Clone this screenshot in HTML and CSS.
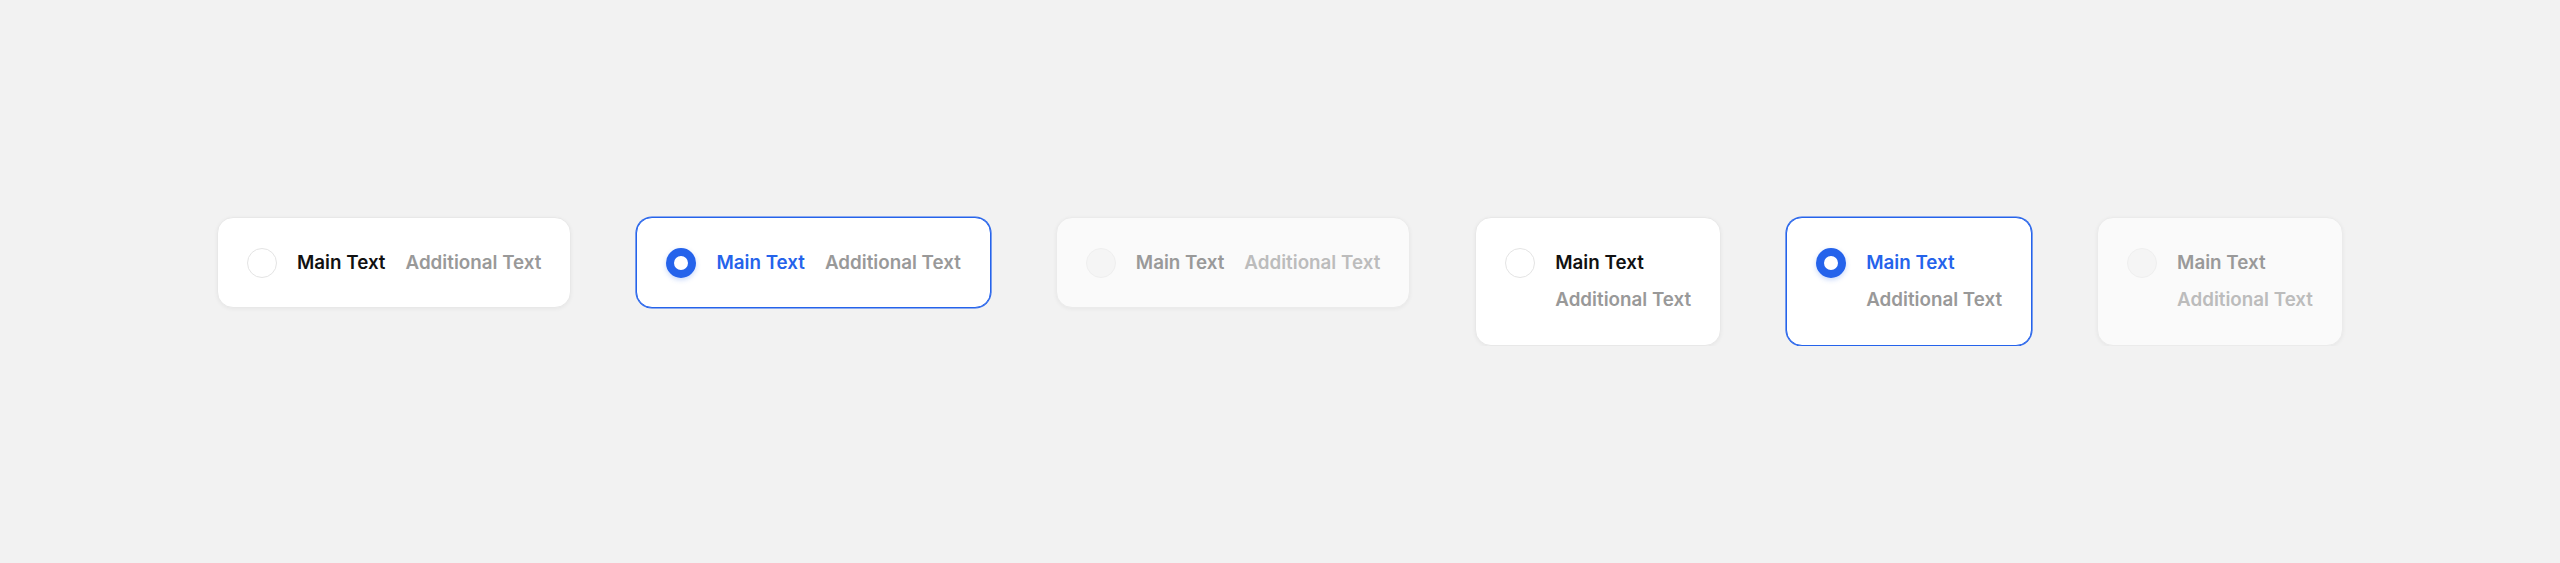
FILE: index.html
```html
<!DOCTYPE html>
<html>
<head>
  <title>Radio cards</title>
  <meta charset="UTF-8"/>
  <link rel="stylesheet" href="styles.css">
</head>

<body>
<main class="board">
  <!-- 横向 -->
  <label class="card">
    <span class="radio"></span>
    <span class="texts">
      <span class="main-text">Main Text</span>
      <span class="extra-text">Additional Text</span>
    </span>
  </label>

  <label class="card selected">
    <span class="radio"></span>
    <span class="texts">
      <span class="main-text">Main Text</span>
      <span class="extra-text">Additional Text</span>
    </span>
  </label>

  <label class="card disabled">
    <span class="radio"></span>
    <span class="texts">
      <span class="main-text">Main Text</span>
      <span class="extra-text">Additional Text</span>
    </span>
  </label>

  <!-- 纵向 -->
  <label class="card stacked">
    <span class="radio"></span>
    <span class="texts">
      <span class="main-text">Main Text</span>
      <span class="extra-text">Additional Text</span>
    </span>
  </label>

  <label class="card stacked selected">
    <span class="radio"></span>
    <span class="texts">
      <span class="main-text">Main Text</span>
      <span class="extra-text">Additional Text</span>
    </span>
  </label>

  <label class="card stacked disabled">
    <span class="radio"></span>
    <span class="texts">
      <span class="main-text">Main Text</span>
      <span class="extra-text">Additional Text</span>
    </span>
  </label>
</main>
</body>
</html>
```

FILE: styles.css
```css
* {
  box-sizing: border-box;
}

body {
  background-color: #f2f2f2;
  font-family: Inter, "Noto Sans", sans-serif;
  font-size: 18.8px;
  margin: 0;
  padding: 0;
}

.board {
  display: flex;
  align-items: flex-start;
  justify-content: center;
  gap: 65px;
  padding-top: 217px;
}

/* 卡片 */
.card {
  display: flex;
  align-items: flex-start;
  gap: 20px;
  padding: 29.5px 29px;
  background-color: #fff;
  border: 1px solid #e8e8e8;
  border-radius: 16px;
  box-shadow: 0 1px 4px rgba(0, 0, 0, 0.05);
  cursor: pointer;
}

.texts {
  display: flex;
  align-items: center;
  gap: 20px;
}

.card.stacked .texts {
  flex-direction: column;
  align-items: flex-start;
  gap: 7.5px;
}

.main-text,
.extra-text {
  font-weight: 600;
  line-height: 30px;
  white-space: nowrap;
}

.main-text {
  color: #111;
}

.extra-text {
  color: #999;
}

/* 单选圆 */
.radio {
  width: 30px;
  height: 30px;
  flex-shrink: 0;
  border-radius: 50%;
  background-color: #fff;
  border: 1.5px solid #e4e4e4;
}

/* 选中 */
.card.selected {
  border-color: #2563eb;
  box-shadow: 0 0 0 0.6px #2563eb;
}

.card.selected .main-text {
  color: #2563eb;
}

.card.selected .radio {
  border: 8px solid #2563eb;
  background-color: #fff;
  box-shadow: 0 2px 5px rgba(37, 99, 235, 0.25);
}

/* 禁用 */
.card.disabled {
  background-color: #fafafa;
  border-color: #ebebeb;
  cursor: default;
}

.card.disabled .radio {
  background-color: #f5f5f5;
  border-color: #efefef;
}

.card.disabled .main-text {
  color: #999;
}

.card.disabled .extra-text {
  color: #bcbcbc;
}
```
